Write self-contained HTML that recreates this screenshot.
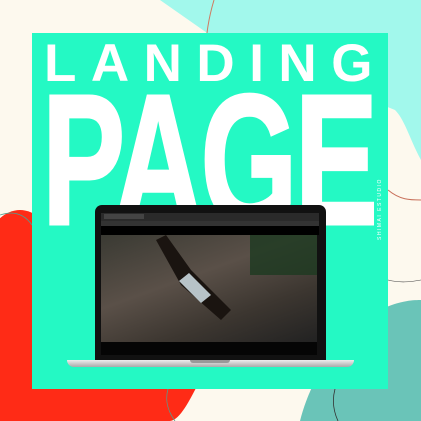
<!DOCTYPE html>
<html><head><meta charset="utf-8"><style>
html,body{margin:0;padding:0;width:421px;height:421px;overflow:hidden}
body{position:relative;background:#fdf9ee;font-family:"Liberation Sans",sans-serif}
.abs{position:absolute}
</style></head><body>
<svg class="abs" style="left:0;top:0" width="421" height="421">
<path d="M160 0 L421 0 L421 160 C410 140 405 120 395 110 L210 35 Z" fill="#a2f8ec"/>
<path d="M214 0 C208 20 205 40 206 60" stroke="#d07a60" fill="none" stroke-width="1"/>
<ellipse cx="20" cy="330" rx="55" ry="120" fill="#ff2b16"/>
<path d="M0 380 L200 380 C190 400 180 420 170 421 L0 421 Z" fill="#ff2b16"/>
<path d="M300 421 C310 380 340 330 380 310 C400 300 415 300 421 300 L421 421 Z" fill="#6ac4b8"/>
<path d="M388 190 C400 200 410 200 421 200" stroke="#c8705a" fill="none"/>
<path d="M388 280 C400 283 410 282 421 280" stroke="#444" fill="none" stroke-width=".6"/>
<path d="M0 215 C15 210 25 215 32 225" stroke="#5a9a8a" fill="none" stroke-width=".8"/>
<path d="M168 389 C165 400 167 410 175 421" stroke="#5a9a8a" fill="none" stroke-width=".8"/>
<path d="M335 389 C332 400 333 410 338 421" stroke="#333" fill="none" stroke-width=".8"/>
</svg>
<div class="abs" style="left:32px;top:33px;width:356px;height:356px;background:#24f9c4"></div>
<div class="abs" style="left:44px;top:37px;font-size:53px;font-weight:bold;color:#fff;letter-spacing:14.5px;line-height:53px;white-space:nowrap">LANDING</div>
<div class="abs" style="left:42px;top:68px;font-size:186px;font-weight:bold;color:#fff;line-height:186px;transform:scaleX(0.67);transform-origin:left top;letter-spacing:-4px;white-space:nowrap;-webkit-text-stroke:3px #fff">PAGE</div>
<div class="abs" style="left:377px;top:240px;transform:rotate(-90deg);transform-origin:left top;font-size:5px;line-height:6px;color:#fff;letter-spacing:1.5px;white-space:nowrap">SHIMAI ESTUDIO</div>
<!-- laptop -->
<div class="abs" style="left:95px;top:205px;width:231px;height:157px;background:#111;border-radius:7px 7px 0 0"></div>
<div class="abs" style="left:101px;top:213px;width:218px;height:9px;background:#2a2a2a"></div>
<div class="abs" style="left:104px;top:214px;width:40px;height:5px;background:#444"></div>
<div class="abs" style="left:101px;top:221px;width:218px;height:5px;background:#333"></div>
<div class="abs" style="left:101px;top:226px;width:218px;height:9px;background:#000"></div>
<div class="abs" style="left:101px;top:235px;width:216px;height:107px;background:linear-gradient(160deg,#3a3a33 0%,#5a5048 40%,#3c3630 70%,#222 100%)"></div>
<div class="abs" style="left:250px;top:235px;width:67px;height:40px;background:#1d3a20;opacity:.8"></div>
<svg class="abs" style="left:101px;top:235px" width="216" height="107">
<path d="M55 5 L65 0 L90 35 L130 75 L120 85 L80 50 Z" fill="#1a1410"/>
<path d="M88 38 L110 60 L100 68 L78 46 Z" fill="#b7c3c8"/>
</svg>
<div class="abs" style="left:101px;top:342px;width:216px;height:13px;background:#050505"></div>
<div class="abs" style="left:67px;top:360px;width:287px;height:7px;background:linear-gradient(#eee,#aaa);border-radius:0 0 20px 20px"></div>
<div class="abs" style="left:190px;top:360px;width:40px;height:3px;background:#999;border-radius:0 0 3px 3px"></div>
</body></html>
